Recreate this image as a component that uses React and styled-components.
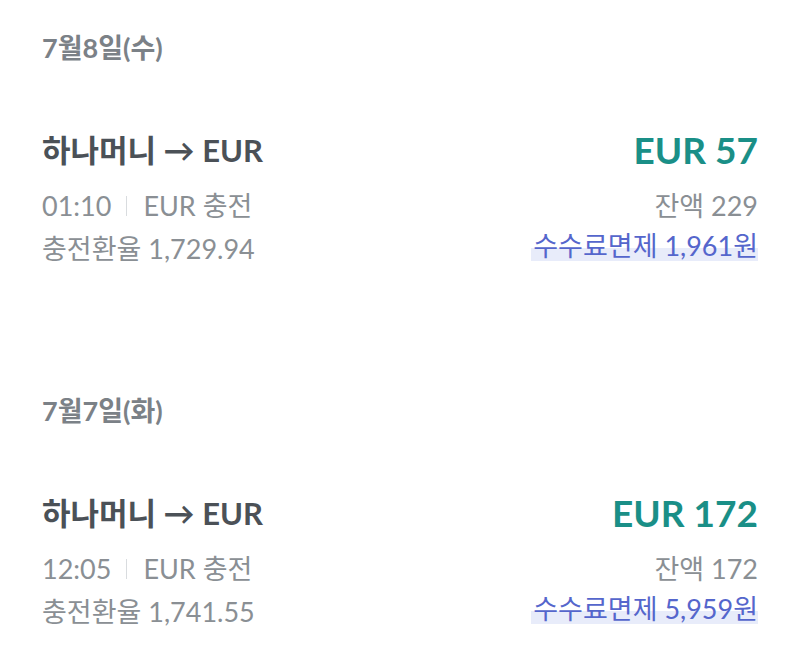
import React from "react";
import styled, { createGlobalStyle } from "styled-components";

const Global = createGlobalStyle`
  html, body { margin: 0; padding: 0; background: #fff; }
  body { font-family: Lato, "Noto Sans CJK KR", sans-serif; }
`;

const Page = styled.div`
  width: 800px;
  padding: 32px 42px 8px;
  box-sizing: border-box;
  display: flex;
  flex-direction: column;
  gap: 125px;
`;

const Section = styled.section``;

const DateLabel = styled.div`
  font-size: 27px;
  font-weight: 700;
  color: #7b8187;
  line-height: 32px;
  margin-bottom: 66px;
`;

const Row = styled.div`
  display: flex;
  justify-content: space-between;
  align-items: flex-start;
`;

const Col = styled.div`
  display: flex;
  flex-direction: column;
  align-items: ${(p) => (p.$right ? "flex-end" : "flex-start")};
`;

const Title = styled.div`
  font-weight: 700;
  color: ${(p) => (p.$accent ? "#1a8f87" : "#4b5157")};
  line-height: 40px;
  font-size: ${(p) => (p.$accent ? "37px" : "31px")};
  margin-bottom: 14px;
`;

const Line = styled.div`
  font-size: 27px;
  font-weight: 400;
  color: #8a8f94;
  line-height: 43px;
  display: flex;
  align-items: center;
`;

const Sep = styled.span`
  display: inline-block;
  width: 1px;
  height: 20px;
  background: #d9dcdf;
  margin: 0 16px 0 15px;
`;

const Fee = styled.span`
  color: #5566cc;
  background: linear-gradient(to bottom, transparent 58%, #e8ecfa 58%, #e8ecfa 100%);
  line-height: 30px;
  padding-left: 2px;
  margin-top: 4px;
`;

const data = [
  { date: "7월8일(수)", time: "01:10", rate: "1,729.94", amount: "EUR 57", bal: "229", fee: "1,961원" },
  { date: "7월7일(화)", time: "12:05", rate: "1,741.55", amount: "EUR 172", bal: "172", fee: "5,959원" },
];

export default function App() {
  return (
    <Page>
      <Global />
      {data.map((d) => (
        <Section key={d.date}>
          <DateLabel>{d.date}</DateLabel>
          <Row>
            <Col>
              <Title>하나머니 → EUR</Title>
              <Line>
                {d.time}
                <Sep />
                EUR 충전
              </Line>
              <Line>충전환율 {d.rate}</Line>
            </Col>
            <Col $right>
              <Title $accent>{d.amount}</Title>
              <Line>잔액 {d.bal}</Line>
              <Line>
                <Fee>수수료면제 {d.fee}</Fee>
              </Line>
            </Col>
          </Row>
        </Section>
      ))}
    </Page>
  );
}
